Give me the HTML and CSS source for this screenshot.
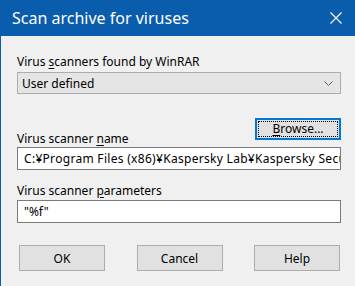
FILE: index.html
```html
<!DOCTYPE html>
<html lang="en">
<head>
    <meta charset="UTF-8">
    <title>Scan archive for viruses</title>
    <link rel="stylesheet" href="styles.css">
</head>
<body>
    <div class="window">
        <div class="titlebar">
            <span class="title">Scan archive for viruses</span>
            <svg class="close" width="12" height="12" viewBox="0 0 12 12">
                <path d="M0.5 0.5 L11.5 11.5 M11.5 0.5 L0.5 11.5" stroke="#fff" stroke-width="1.1" fill="none"/>
            </svg>
        </div>
        <div class="content">
            <div class="label">Virus <u>s</u>canners found by WinRAR</div>
            <div class="combo">
                <span>User defined</span>
                <svg width="9" height="5" viewBox="0 0 9 5">
                    <path d="M0.5 0.5 L4.5 4.5 L8.5 0.5" stroke="#606060" stroke-width="1" fill="none"/>
                </svg>
            </div>

            <div class="name-row">
                <div class="label">Virus scanner <u>n</u>ame</div>
                <button class="btn default"><span class="focus"><u>B</u>rowse...</span></button>
            </div>
            <div class="edit path">C:¥Program Files (x86)¥Kaspersky Lab¥Kaspersky Secu</div>

            <div class="label params">Virus scanner <u>p</u>arameters</div>
            <div class="edit">"%f"</div>

            <div class="buttons">
                <button class="btn">OK</button>
                <button class="btn">Cancel</button>
                <button class="btn">Help</button>
            </div>
        </div>
    </div>
</body>
</html>
```

FILE: styles.css
```css
body {
    margin: 0;
    font-family: 'Noto Sans', sans-serif;
    background: #f0f0f0;
}
.window {
    width: 355px;
    height: 286px;
    border-left: 1px solid #0a5cac;
    box-sizing: border-box;
    background: #f0f0f0;
}
.titlebar {
    height: 36px;
    background: #0a5cac;
    color: white;
    display: flex;
    align-items: center;
    justify-content: space-between;
    padding: 0 13px 0 11px;
}
.title {
    font-size: 16px;
    line-height: 36px;
}
.close {
    margin-top: -1px;
}
.content {
    display: flex;
    flex-direction: column;
    padding: 18px 14px 0 16px;
    font-size: 12px;
    color: #000;
}
.label {
    line-height: 15px;
    margin-bottom: 2px;
}
u {
    text-underline-offset: 2px;
}
.combo {
    height: 22px;
    margin-top: 1px;
    box-sizing: border-box;
    border: 1px solid #adadad;
    background: #e5e5e5;
    display: flex;
    align-items: center;
    justify-content: space-between;
    padding: 0 7px 0 4px;
}
.name-row {
    display: flex;
    justify-content: space-between;
    margin-top: 24px;
}
.name-row .label {
    align-self: flex-end;
    margin-bottom: 1px;
}
.name-row .btn {
    margin-bottom: 7px;
}
.edit {
    height: 23px;
    box-sizing: border-box;
    border: 1px solid #7a7a7a;
    background: #fff;
    padding: 0 6px;
    line-height: 21px;
    white-space: nowrap;
    overflow: hidden;
}
.path {
    padding-right: 0;
    letter-spacing: 0.3px;
}
.params {
    margin-top: 13px;
}
.btn {
    width: 86px;
    height: 22px;
    box-sizing: border-box;
    border: 1px solid #adadad;
    background: #e1e1e1;
    font-family: inherit;
    font-size: 12px;
    color: #000;
    padding: 0;
}
.btn.default {
    border: 2px solid #0078d7;
    padding: 1px;
}
.focus {
    display: block;
    height: 100%;
    box-sizing: border-box;
    border: 1px dotted #000;
    line-height: 14px;
}
.buttons {
    display: flex;
    justify-content: space-between;
    margin-top: 22px;
    padding: 0 1px 0 2px;
}
.buttons .btn {
    height: 26px;
}
```
